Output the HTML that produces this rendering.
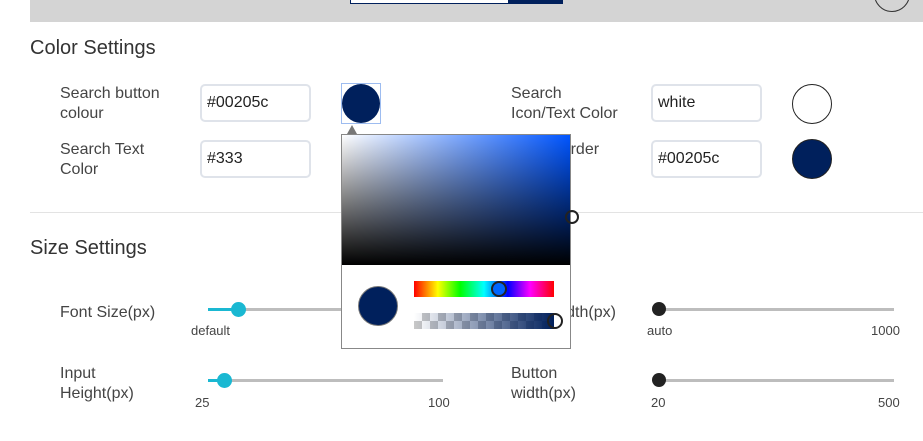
<!DOCTYPE html>
<html><head><style>
body{margin:0;width:923px;height:441px;overflow:hidden;background:#fff;font-family:"Liberation Sans",sans-serif;color:#333;position:relative}
.a{position:absolute}
.t{position:absolute;font-size:16px;line-height:20px;color:#444}
.h{position:absolute;font-size:20px;color:#333}
.in{position:absolute;border:2px solid #dfe3ea;border-radius:5px;box-sizing:border-box;font-size:16px;padding-left:5px;line-height:34px;color:#222}
.c{position:absolute;border-radius:50%;box-sizing:border-box}
.tr{position:absolute;height:3px;background:#bdbdbd}
.s{position:absolute;font-size:13px;color:#444}
</style></head><body>
<div class="a" style="left:30px;top:0;width:893px;height:22px;background:#d4d4d4"></div>
<div class="a" style="left:350px;top:-1px;width:159px;height:5px;background:#fff;border:1px solid #00205c;box-sizing:border-box"></div>
<div class="a" style="left:509px;top:0;width:54px;height:4px;background:#00205c"></div>
<div class="c" style="left:874px;top:-24px;width:36px;height:36px;border:1.5px solid #333"></div>

<div class="h" style="left:30px;top:37px">Color Settings</div>
<div class="t" style="left:60px;top:84px">Search button<br>colour</div>
<div class="in" style="left:200px;top:84px;width:111px;height:38px">#00205c</div>
<div class="a" style="left:341px;top:83px;width:40px;height:41px;border:1px solid #9dbcf0;box-sizing:border-box"></div>
<div class="c" style="left:342px;top:84px;width:38px;height:39px;background:#00205c"></div>
<div class="t" style="left:511px;top:84px">Search<br>Icon/Text Color</div>
<div class="in" style="left:651px;top:84px;width:111px;height:38px">white</div>
<div class="c" style="left:792px;top:84px;width:40px;height:40px;border:1px solid #222;background:#fff"></div>

<div class="t" style="left:60px;top:140px">Search Text<br>Color</div>
<div class="in" style="left:200px;top:140px;width:111px;height:38px">#333</div>
<div class="t" style="left:511px;top:140px">Input Border<br>Color</div>
<div class="in" style="left:651px;top:140px;width:111px;height:38px">#00205c</div>
<div class="c" style="left:792px;top:139px;width:40px;height:40px;border:1px solid #222;background:#00205c"></div>

<div class="a" style="left:30px;top:212px;width:893px;height:1px;background:#e3e3e3"></div>
<div class="h" style="left:30px;top:237px">Size Settings</div>

<div class="t" style="left:60px;top:303px">Font Size(px)</div>
<div class="tr" style="left:208px;top:308px;width:235px"></div>
<div class="tr" style="left:208px;top:308px;width:30px;background:#1ab8d2"></div>
<div class="c" style="left:231px;top:302px;width:15px;height:15px;background:#1ab8d2"></div>
<div class="s" style="left:191px;top:323px">default</div>
<div class="t" style="left:511px;top:303px">Input width(px)</div>
<div class="tr" style="left:659px;top:308px;width:235px"></div>
<div class="c" style="left:652px;top:302px;width:14px;height:14px;background:#222"></div>
<div class="s" style="left:647px;top:323px">auto</div>
<div class="s" style="left:871px;top:323px">1000</div>

<div class="t" style="left:60px;top:364px">Input<br>Height(px)</div>
<div class="tr" style="left:208px;top:379px;width:235px"></div>
<div class="tr" style="left:208px;top:379px;width:16px;background:#1ab8d2"></div>
<div class="c" style="left:217px;top:373px;width:15px;height:15px;background:#1ab8d2"></div>
<div class="s" style="left:195px;top:395px">25</div>
<div class="s" style="left:428px;top:395px">100</div>
<div class="t" style="left:511px;top:364px">Button<br>width(px)</div>
<div class="tr" style="left:659px;top:379px;width:235px"></div>
<div class="c" style="left:652px;top:373px;width:14px;height:14px;background:#222"></div>
<div class="s" style="left:651px;top:395px">20</div>
<div class="s" style="left:878px;top:395px">500</div>

<!-- picker -->
<div class="a" style="left:347px;top:125px;width:0;height:0;border-left:5px solid transparent;border-right:5px solid transparent;border-bottom:9px solid #777"></div>
<div class="a" style="left:341px;top:134px;width:230px;height:215px;border:1px solid #888;box-sizing:border-box;background:#fff">
 <div class="a" style="left:0;top:0;width:228px;height:130px;background:linear-gradient(to top,#000,rgba(0,0,0,0)),linear-gradient(to right,#fff,#0055ff)"></div>
 <div class="c" style="left:16px;top:151px;width:40px;height:40px;background:#00205c;border:1px solid #777"></div>
 <div class="a" style="left:72px;top:146px;width:140px;height:16px;background:linear-gradient(to right,#f00,#ff0 17%,#0f0 33%,#0ff 50%,#00f 67%,#f0f 83%,#f00)"></div>
 <div class="a" style="left:72px;top:178px;width:140px;height:16px;background:linear-gradient(to right,rgba(0,32,92,0),#00205c),repeating-conic-gradient(#c8c8c8 0 25%,#fff 0 50%) 0 0/16px 16px"></div>
</div>
<div class="c" style="left:565px;top:210px;width:14px;height:14px;border:2px solid #222"></div>
<div class="c" style="left:491px;top:281px;width:16px;height:16px;border:2px solid #222;background:#0066ff"></div>
<div class="c" style="left:547px;top:313px;width:16px;height:16px;border:2px solid #222"></div>
</body></html>
